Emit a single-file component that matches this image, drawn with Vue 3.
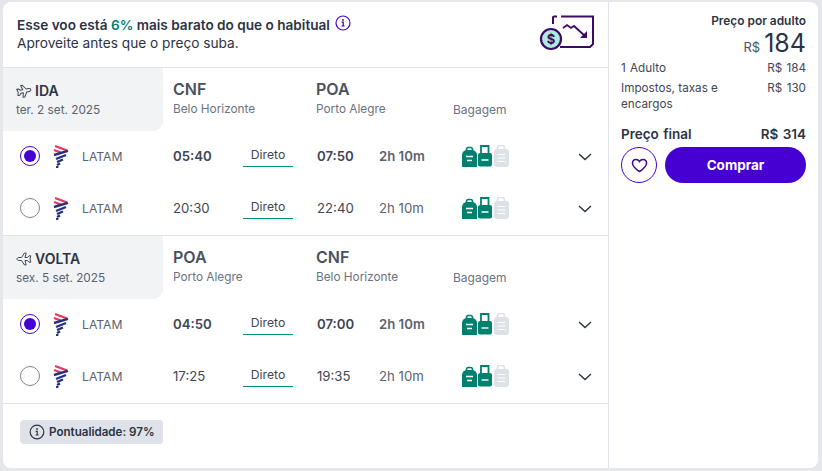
<script setup>
const legs = [
  {
    label: 'IDA',
    date: 'ter. 2 set. 2025',
    from: 'CNF',
    fromCity: 'Belo Horizonte',
    to: 'POA',
    toCity: 'Porto Alegre',
    flights: [
      { dep: '05:40', arr: '07:50', dur: '2h 10m', selected: true },
      { dep: '20:30', arr: '22:40', dur: '2h 10m', selected: false },
    ],
  },
  {
    label: 'VOLTA',
    date: 'sex. 5 set. 2025',
    from: 'POA',
    fromCity: 'Porto Alegre',
    to: 'CNF',
    toCity: 'Belo Horizonte',
    back: true,
    flights: [
      { dep: '04:50', arr: '07:00', dur: '2h 10m', selected: true },
      { dep: '17:25', arr: '19:35', dur: '2h 10m', selected: false },
    ],
  },
]
</script>

<template>
  <div class="page">
    <div class="card">
      <div class="main">
        <header class="promo">
          <div>
            <div class="promo-title">
              Esse voo está <span class="green">6%</span> mais barato do que o habitual
              <svg class="promo-info" viewBox="0 0 16 16" width="16" height="16">
                <circle cx="8" cy="8" r="7" fill="none" stroke="#4600d1" stroke-width="1.2" />
                <path d="M6.6 7.2H8.2V11M6.6 11H9.6" fill="none" stroke="#2b0a5e" stroke-width="1.2" />
                <circle cx="8" cy="4.9" r="0.9" fill="#2b0a5e" />
              </svg>
            </div>
            <div class="promo-sub">Aproveite antes que o preço suba.</div>
          </div>
          <svg class="promo-icon" viewBox="0 0 56 36" width="56" height="36">
            <path d="M15 9V2.500a1 1 0 0 1 1-1h3M23 1.500h32V29l-3 3H22" fill="none" stroke="#3d0a66" stroke-width="2" />
            <path d="M25 13l4-3 4 3 3-2 11 10" fill="none" stroke="#3d0a66" stroke-width="1.8" />
            <path d="M49 16v7h-7z" fill="#3d0a66" />
            <circle cx="13" cy="24" r="10" fill="#aeeadd" stroke="#3d0a66" stroke-width="2.2" />
            <text x="13" y="28.500" class="dollar">$</text>
          </svg>
        </header>

        <section v-for="leg in legs" :key="leg.label" class="leg">
          <div class="leg-head">
            <div class="leg-label">
              <div class="leg-name">
                <svg class="plane" :class="{ 'plane-back': leg.back }" viewBox="0 0 16 16" width="16" height="16">
                  <path
                    d="M15 8c0-1-1-1.500-2-1.500H10.500L7.500 2H5.800L7 6.500H4.500L3 4.800H1.200L2 8l-.8 3.200H3l1.500-1.700H7L5.800 14h1.700l3-4.500H13c1 0 2-.5 2-1.500z"
                    fill="none"
                    stroke="#3f4654"
                    stroke-width="1"
                    stroke-linejoin="round"
                  />
                </svg>
                {{ leg.label }}
              </div>
              <div class="leg-date">{{ leg.date }}</div>
            </div>
            <div class="place">
              <div class="code">{{ leg.from }}</div>
              <div class="city">{{ leg.fromCity }}</div>
            </div>
            <div class="place">
              <div class="code">{{ leg.to }}</div>
              <div class="city">{{ leg.toCity }}</div>
            </div>
            <div class="bag-title">Bagagem</div>
          </div>

          <div
            v-for="flight in leg.flights"
            :key="flight.dep"
            class="flight"
            :class="{ 'flight-on': flight.selected }"
          >
            <span class="radio" :class="{ 'radio-on': flight.selected }"></span>
            <svg class="logo" viewBox="0 0 16 24" width="16" height="24">
              <path d="M2 2l12 4.500M1 6l8 3" fill="none" stroke="#e8365c" stroke-width="2.400" />
              <path d="M15 6.800L1 11M13 11L3 15M10 15.500L4 18M7 19.500L4 21" fill="none" stroke="#26307f" stroke-width="2.400" />
              <rect x="3" y="22" width="2.400" height="2" fill="#26307f" />
            </svg>
            <span class="airline">LATAM</span>
            <span class="time">{{ flight.dep }}</span>
            <span class="direct">Direto</span>
            <span class="time time-arr">{{ flight.arr }}</span>
            <span class="dur">{{ flight.dur }}</span>
            <span class="bags">
              <svg viewBox="0 0 48 22" width="48" height="22">
                <path d="M4.500 6V4.500a2 2 0 0 1 2-2h2a2 2 0 0 1 2 2V6" fill="none" stroke="#00806f" stroke-width="1.600" />
                <path d="M0 10a5 5 0 0 1 5-5h5a5 5 0 0 1 5 5v12H0z" fill="#00806f" />
                <path d="M4 11.500h7M5 15.500h5" stroke="#fff" stroke-width="1.300" />
                <path d="M19 9V1h7.500V9" fill="none" stroke="#00806f" stroke-width="1.800" />
                <rect x="16" y="8" width="14" height="13.500" rx="2" fill="#00806f" />
                <path d="M19.500 15h7" stroke="#fff" stroke-width="1.400" />
                <path d="M35.500 6V2.500a2 2 0 0 1 2-2h3a2 2 0 0 1 2 2V6" fill="none" stroke="#dde1e8" stroke-width="1.600" />
                <rect x="32" y="4" width="15" height="18" rx="3" fill="#dde1e8" />
                <path d="M35.500 9.500h8M35.500 13h8M35.500 16.500h8" stroke="#fff" stroke-width="1" />
              </svg>
            </span>
            <svg class="chevron" viewBox="0 0 14 8" width="14" height="8">
              <path d="M1 1l6 5.500L13 1" fill="none" stroke="#2c3342" stroke-width="1.400" />
            </svg>
          </div>
        </section>

        <footer class="foot">
          <span class="badge">
            <svg viewBox="0 0 16 16" width="16" height="16">
              <circle cx="8" cy="8" r="6.800" fill="none" stroke="#2c3342" stroke-width="1.200" />
              <path d="M6.700 7.300H8.200V11M6.700 11H9.600" fill="none" stroke="#2c3342" stroke-width="1.200" />
              <circle cx="8" cy="5" r="0.900" fill="#2c3342" />
            </svg>
            Pontualidade: 97%
          </span>
        </footer>
      </div>

      <aside class="side">
        <div class="per-adult">Preço por adulto</div>
        <div class="big-price"><span class="cur">R$</span>184</div>
        <div class="line"><span>1 Adulto</span><span>R$ 184</span></div>
        <div class="line"><span class="line-name">Impostos, taxas e encargos</span><span>R$ 130</span></div>
        <div class="total"><span>Preço final</span><span>R$ 314</span></div>
        <div class="actions">
          <button class="fav">
            <svg viewBox="0 0 18 16" width="17" height="15">
              <path
                d="M9 14.500C4 11 1.500 8.500 1.500 5.500 1.500 3 3.300 1.500 5.200 1.500 6.800 1.500 8.200 2.300 9 3.700 9.800 2.300 11.200 1.500 12.800 1.500 14.700 1.500 16.500 3 16.500 5.500 16.500 8.500 14 11 9 14.500z"
                fill="none"
                stroke="#3d0a8f"
                stroke-width="1.600"
              />
            </svg>
          </button>
          <button class="buy">Comprar</button>
        </div>
      </aside>
    </div>
  </div>
</template>

<style scoped>
.page {
  width: 822px;
  height: 471px;
  box-sizing: border-box;
  padding: 2px 4px 3px 3px;
  background: #e5e7eb;
  font-family: Inter, "Noto Sans", sans-serif;
  color: #3f4654;
}

.card {
  display: flex;
  height: 100%;
  background: #fff;
  border-radius: 8px;
  overflow: hidden;
}

.main {
  width: 605px;
  flex: none;
  border-right: 1px solid #dfe2e8;
}

.promo {
  height: 66px;
  box-sizing: border-box;
  border-bottom: 1px solid #dfe2e8;
  padding: 13px 14px 0 14px;
  display: flex;
  justify-content: space-between;
  align-items: flex-start;
}

.promo-title {
  font-size: 13.600px;
  font-weight: 600;
  line-height: 18px;
  color: #2c3342;
}

.green {
  color: #00806f;
}

.promo-info {
  margin-left: 2px;
  vertical-align: -1px;
}

.promo-sub {
  font-size: 13.700px;
  line-height: 18px;
  color: #2c3342;
}

.dollar {
  font-size: 13px;
  font-weight: 700;
  fill: #3d0a66;
  text-anchor: middle;
}

.leg {
  border-bottom: 1px solid #dfe2e8;
}

.leg-head {
  display: grid;
  grid-template-columns: 160px 143px 137px 1fr;
  height: 63px;
}

.leg-label {
  background: #f1f3f5;
  border-bottom-right-radius: 10px;
  padding: 13px 0 0 13px;
}

.leg-name {
  display: flex;
  align-items: center;
  gap: 3px;
  font-size: 14px;
  font-weight: 600;
  line-height: 20px;
  color: #2c3342;
}

.plane {
  transform: rotate(-12deg);
}

.plane-back {
  transform: scaleX(-1);
}

.leg-date {
  font-size: 11.800px;
  line-height: 19px;
  color: #5b6270;
}

.place {
  padding: 12px 0 0 10px;
}

.code {
  font-size: 16px;
  font-weight: 600;
  line-height: 19px;
  color: #4b515c;
}

.city {
  font-size: 11.800px;
  line-height: 20px;
  color: #6b7280;
}

.bag-title {
  padding: 33px 0 0 10px;
  font-size: 12px;
  line-height: 18px;
  color: #6b7280;
}

.flight {
  display: flex;
  align-items: center;
  box-sizing: border-box;
  height: 52px;
  padding-bottom: 2px;
  font-size: 13.200px;
  color: #3f4654;
}

.radio {
  width: 20px;
  height: 20px;
  box-sizing: border-box;
  margin-left: 17px;
  border: 1.200px solid #80858f;
  border-radius: 50%;
  flex: none;
}

.radio-on {
  border-color: #4600d1;
  position: relative;
}

.radio-on::after {
  content: "";
  position: absolute;
  inset: 3px;
  border-radius: 50%;
  background: #4600d1;
}

.logo {
  margin-left: 13px;
  flex: none;
}

.airline {
  width: 91px;
  margin-left: 13px;
  flex: none;
  font-size: 12.200px;
  color: #5b6270;
}

.time {
  width: 70px;
  flex: none;
}

.time-arr {
  width: 62px;
  margin-left: 24px;
}

.flight-on .time,
.flight-on .dur {
  font-weight: 600;
}

.direct {
  width: 50px;
  flex: none;
  box-sizing: border-box;
  height: 22px;
  text-align: center;
  font-size: 12.200px;
  line-height: 19px;
  border-bottom: 1px solid #008f7a;
}

.dur {
  width: 83px;
  flex: none;
  color: #5b6270;
}

.bags {
  width: 116px;
  flex: none;
  display: flex;
}

.chevron {
  flex: none;
  margin-top: 1px;
}

.foot {
  padding: 16px 0 0 17px;
}

.badge {
  display: inline-flex;
  align-items: center;
  gap: 4px;
  height: 24px;
  padding: 0 8px 0 9px;
  background: #dfe2e8;
  border-radius: 4px;
  font-size: 11.600px;
  font-weight: 600;
  color: #2c3342;
}

.side {
  flex: 1;
  padding: 12px 12px 0;
  color: #3f4654;
}

.per-adult {
  text-align: right;
  font-size: 11.900px;
  font-weight: 600;
  line-height: 14px;
  color: #2c3342;
}

.big-price {
  text-align: right;
  font-size: 25px;
  line-height: 30px;
  color: #2c3342;
  margin-bottom: -2px;
}

.cur {
  margin-right: 4px;
  font-size: 13px;
  color: #4b515c;
}

.line {
  display: flex;
  justify-content: space-between;
  gap: 12px;
  font-size: 11.700px;
  line-height: 16px;
  margin-bottom: 4px;
  word-spacing: 1px;
}

.line-name {
  width: 110px;
  word-spacing: 0;
}

.total {
  display: flex;
  justify-content: space-between;
  margin-top: 13px;
  font-size: 13.500px;
  font-weight: 600;
  line-height: 18px;
  word-spacing: 1px;
  color: #2c3342;
}

.actions {
  display: flex;
  gap: 8px;
  margin-top: 4px;
}

.fav {
  width: 36px;
  height: 36px;
  padding: 0;
  flex: none;
  display: flex;
  align-items: center;
  justify-content: center;
  background: #fff;
  border: 1px solid #4600d1;
  border-radius: 50%;
}

.buy {
  flex: 1;
  height: 36px;
  border: none;
  border-radius: 18px;
  background: #4600d1;
  color: #fff;
  font-family: inherit;
  font-size: 13.500px;
  font-weight: 700;
}
</style>
